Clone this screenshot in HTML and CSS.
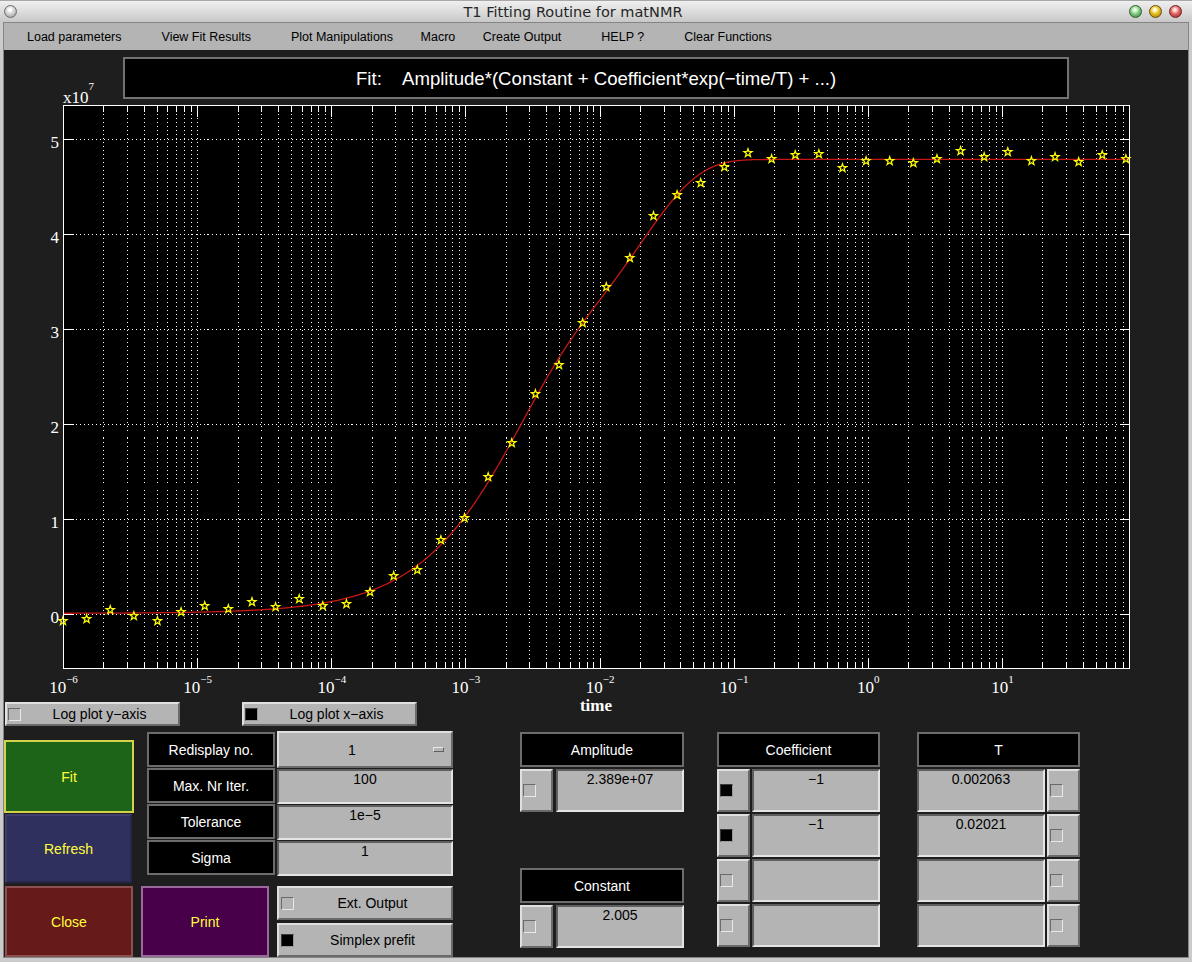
FILE: index.html
```html
<!DOCTYPE html>
<html>
<head>
<meta charset="utf-8">
<title>T1 Fitting Routine for matNMR</title>
<link rel="stylesheet" href="styles.css">
</head>
<body>
<div class="window">
  <div class="titlebar">
    <span class="orb orb-gray"></span>
    <span class="title">T1 Fitting Routine for matNMR</span>
    <span class="orbs"><span class="orb orb-green"></span><span class="orb orb-yellow"></span><span class="orb orb-red"></span></span>
  </div>
  <div class="frame">
    <div class="inner">
      <div class="menubar">
        <span class="menu">Load parameters</span>
        <span class="menu">View Fit Results</span>
        <span class="menu">Plot Manipulations</span>
        <span class="menu menu-narrow">Macro</span>
        <span class="menu">Create Output</span>
        <span class="menu">HELP ?</span>
        <span class="menu">Clear Functions</span>
      </div>
      <div class="client">
        <svg class="plot" width="1184" height="651" viewBox="4 50 1184 651">
          <rect class="ptitle-box" x="124" y="58" width="944" height="40"/>
          <text class="ptitle" x="356" y="85">Fit:</text>
          <text class="ptitle" x="402" y="85">Amplitude*(Constant + Coefficient*exp(−time/T) + ...)</text>
          <rect class="axes-bg" x="63.5" y="105.5" width="1066" height="563"/>
          <g id="grid"></g>
          <g id="data"></g>
          <rect class="axes-box" x="63.5" y="105.5" width="1066" height="563"/>
          <text class="tick" x="63" y="103">x10<tspan class="sup" dy="-13">7</tspan></text>
          <text class="tick" x="59" y="148" text-anchor="end">5</text>
          <text class="tick" x="59" y="243" text-anchor="end">4</text>
          <text class="tick" x="59" y="338" text-anchor="end">3</text>
          <text class="tick" x="59" y="433" text-anchor="end">2</text>
          <text class="tick" x="59" y="528" text-anchor="end">1</text>
          <text class="tick" x="59" y="623" text-anchor="end">0</text>
          <text class="tick" x="63.5" y="693" text-anchor="middle">10<tspan class="sup" dy="-10">−6</tspan></text>
          <text class="tick" x="197.6" y="693" text-anchor="middle">10<tspan class="sup" dy="-10">−5</tspan></text>
          <text class="tick" x="331.8" y="693" text-anchor="middle">10<tspan class="sup" dy="-10">−4</tspan></text>
          <text class="tick" x="465.9" y="693" text-anchor="middle">10<tspan class="sup" dy="-10">−3</tspan></text>
          <text class="tick" x="600.1" y="693" text-anchor="middle">10<tspan class="sup" dy="-10">−2</tspan></text>
          <text class="tick" x="734.2" y="693" text-anchor="middle">10<tspan class="sup" dy="-10">−1</tspan></text>
          <text class="tick" x="868.3" y="693" text-anchor="middle">10<tspan class="sup" dy="-10">0</tspan></text>
          <text class="tick" x="1002.5" y="693" text-anchor="middle">10<tspan class="sup" dy="-10">1</tspan></text>
          <text class="xlabel" x="596" y="711" text-anchor="middle">time</text>
        </svg>
        <div class="logrow">
          <div class="raised btn logbtn"><i class="cb"></i><span>Log plot y−axis</span></div>
          <div class="raised btn logbtn"><i class="cb cb-on"></i><span>Log plot x−axis</span></div>
        </div>
        <div class="controls">
          <div class="col col-actions">
            <div class="act act-fit">Fit</div>
            <div class="act act-refresh">Refresh</div>
            <div class="act act-close">Close</div>
          </div>
          <div class="col col-labels">
            <div class="lbl">Redisplay no.</div>
            <div class="lbl">Max. Nr Iter.</div>
            <div class="lbl">Tolerance</div>
            <div class="lbl">Sigma</div>
            <div class="act act-print">Print</div>
          </div>
          <div class="col col-values">
            <div class="raised popup"><span>1</span><i class="popup-ind"></i></div>
            <div class="sunken edit">100</div>
            <div class="sunken edit">1e−5</div>
            <div class="sunken edit">1</div>
            <div class="raised btn optbtn opt-ext"><i class="cb"></i><span>Ext. Output</span></div>
            <div class="raised btn optbtn opt-simplex"><i class="cb cb-on"></i><span>Simplex prefit</span></div>
          </div>
          <div class="col col-param col-amp">
            <div class="lbl">Amplitude</div>
            <div class="prow"><div class="raised cbbtn"><i class="cb"></i></div><div class="sunken edit">2.389e+07</div></div>
            <div class="lbl lbl-const">Constant</div>
            <div class="prow"><div class="raised cbbtn"><i class="cb"></i></div><div class="sunken edit">2.005</div></div>
          </div>
          <div class="col col-param col-coef">
            <div class="lbl">Coefficient</div>
            <div class="prow"><div class="raised cbbtn"><i class="cb cb-on"></i></div><div class="sunken edit">−1</div></div>
            <div class="prow"><div class="raised cbbtn"><i class="cb cb-on"></i></div><div class="sunken edit">−1</div></div>
            <div class="prow"><div class="raised cbbtn"><i class="cb"></i></div><div class="sunken edit"></div></div>
            <div class="prow"><div class="raised cbbtn"><i class="cb"></i></div><div class="sunken edit"></div></div>
          </div>
          <div class="col col-param col-t">
            <div class="lbl">T</div>
            <div class="prow"><div class="sunken edit">0.002063</div><div class="raised cbbtn"><i class="cb"></i></div></div>
            <div class="prow"><div class="sunken edit">0.02021</div><div class="raised cbbtn"><i class="cb"></i></div></div>
            <div class="prow"><div class="sunken edit"></div><div class="raised cbbtn"><i class="cb"></i></div></div>
            <div class="prow"><div class="sunken edit"></div><div class="raised cbbtn"><i class="cb"></i></div></div>
          </div>
        </div>
      </div>
    </div>
  </div>
</div>
<script src="script.js"></script>
</body>
</html>
```

FILE: styles.css
```css
* { box-sizing: border-box; }
body {
  margin: 0;
  background: #cbcbcb;
  font-family: "Liberation Sans", Arial, sans-serif;
}
.window {
  width: 1192px;
  height: 962px;
  display: flex;
  flex-direction: column;
  overflow: hidden;
}
.titlebar {
  flex: none;
  height: 22px;
  display: flex;
  align-items: center;
  padding: 0 10px 0 4px;
  background: linear-gradient(#efefef, #dcdcdc 50%, #c8c8c8);
  border-top: 1px solid #a8a8a8;
}
.title {
  flex: 1;
  text-align: center;
  font-family: "DejaVu Sans", sans-serif;
  font-size: 14.5px;
  line-height: 20px;
  color: #262626;
}
.orbs { display: flex; gap: 7px; }
.orb {
  width: 13px;
  height: 13px;
  border-radius: 50%;
  flex: none;
}
.orb-gray {
  background: radial-gradient(circle at 45% 35%, #ffffff 0 12%, #d2d2d2 45%, #8c8c8c 100%);
  border: 1px solid #6e6e6e;
}
.orb-green {
  background: radial-gradient(circle at 45% 35%, #eaffea 0 12%, #80cc80 45%, #2f7a2f 100%);
  border: 1px solid #3b5b3b;
}
.orb-yellow {
  background: radial-gradient(circle at 45% 35%, #ffffe0 0 12%, #e6bd1e 45%, #9a6c00 100%);
  border: 1px solid #6a5010;
}
.orb-red {
  background: radial-gradient(circle at 45% 35%, #ffe4e4 0 12%, #e06262 45%, #9c1a1a 100%);
  border: 1px solid #702020;
}
.frame {
  flex: 1;
  display: flex;
  padding: 0 3px 4px 3px;
  background: #cbcbcb;
}
.inner {
  flex: 1;
  display: flex;
  flex-direction: column;
  border: 1px solid #858585;
}
.menubar {
  flex: none;
  height: 27px;
  display: flex;
  align-items: center;
  padding-left: 3px;
  background: #b4b4b4;
  font-size: 12.5px;
  color: #000;
}
.menu { padding: 0 20px; white-space: nowrap; }
.menu-narrow { padding: 0 7.5px; }

.client {
  flex: 1;
  display: flex;
  flex-direction: column;
  background: #1e1e1e;
}
.plot { display: block; flex: none; overflow: visible; }
.ptitle-box { fill: #000; stroke: #727272; stroke-width: 2; }
.ptitle {
  font-family: "Liberation Sans", Arial, sans-serif;
  font-size: 18.6px;
  fill: #fff;
}
.axes-bg { fill: #000; }
.axes-box { fill: none; stroke: #fff; stroke-width: 1; shape-rendering: crispEdges; }
.grid { fill: none; stroke: #fff; stroke-width: 1; stroke-dasharray: 1 3; shape-rendering: crispEdges; }
.ticks { fill: none; stroke: #fff; stroke-width: 1; shape-rendering: crispEdges; }
.curve { fill: none; stroke: #c81616; stroke-width: 1.3; }
.star { fill: none; stroke: #ffff00; stroke-width: 1.2; }
.tick {
  font-family: "Liberation Serif", "Times New Roman", serif;
  font-size: 17px;
  fill: #fff;
}
.sup { font-size: 11px; }
.xlabel {
  font-family: "Liberation Serif", "Times New Roman", serif;
  font-size: 17px;
  font-weight: bold;
  fill: #fff;
}

.raised {
  background: #b4b4b4;
  border: 2px solid;
  border-color: #e0e0e0 #6a6a6a #6a6a6a #e0e0e0;
}
.sunken {
  background: #b4b4b4;
  border: 2px solid;
  border-color: #5e5e5e #e4e4e4 #e4e4e4 #5e5e5e;
}
.btn {
  display: flex;
  align-items: center;
  font-size: 14px;
  color: #000;
}
.btn span { flex: 1; text-align: center; white-space: nowrap; }
.cb {
  display: block;
  width: 13px;
  height: 13px;
  flex: none;
  border: 1px solid;
  border-color: #6a6a6a #e8e8e8 #e8e8e8 #6a6a6a;
  background: #b4b4b4;
}
.cb-on { background: #000; border-color: #3a3a3a #9a9a9a #9a9a9a #3a3a3a; }
.btn .cb { margin-left: 1px; }

.logrow {
  flex: none;
  height: 25px;
  display: flex;
  align-items: flex-end;
}
.logbtn { width: 175px; height: 24px; margin-left: 1px; }
.logbtn + .logbtn { margin-left: 62px; }

.controls {
  flex: none;
  display: flex;
  align-items: flex-start;
  margin-top: 5px;
}
.col { display: flex; flex-direction: column; flex: none; }

.act {
  display: flex;
  align-items: center;
  justify-content: center;
  font-size: 14px;
  color: #ffff3c;
}
.col-actions { width: 130px; padding-top: 9px; }
.act-fit {
  height: 73px;
  width: 130px;
  background: #1e6418;
  border: 2px solid #d4d44c;
}
.act-refresh {
  height: 69px;
  width: 127px;
  margin: 1px 0 0 1px;
  background: #30305e;
  border: 2px solid;
  border-color: #3e3e70 #26264a #26264a #3e3e70;
}
.act-close {
  height: 71px;
  width: 128px;
  margin: 3px 0 0 1px;
  background: #661a1a;
  border: 2px solid #8c5050;
}
.col-labels { width: 134px; margin-left: 7px; padding-top: 1px; gap: 1px; }
.col-labels .lbl { margin-left: 6px; }
.lbl {
  height: 35px;
  width: 128px;
  background: #000;
  border: 2px solid #6c6c6c;
  color: #fff;
  font-size: 14px;
  display: flex;
  align-items: center;
  justify-content: center;
  white-space: nowrap;
}
.act-print {
  height: 71px;
  width: 128px;
  margin-top: 10px;
  background: #48004a;
  border: 2px solid #9a6a9a;
}
.col-values { width: 176px; margin-left: 2px; gap: 1px; }
.popup {
  height: 37px;
  display: flex;
  align-items: center;
  font-size: 14px;
  color: #000;
  padding-right: 7px;
}
.popup span { flex: 1; text-align: center; }
.popup-ind {
  display: block;
  width: 11px;
  height: 5px;
  margin-left: 8px;
  background: #b4b4b4;
  border: 1px solid;
  border-color: #e8e8e8 #606060 #606060 #e8e8e8;
}
.edit {
  height: 35px;
  font-size: 14px;
  line-height: 16px;
  text-align: center;
  color: #000;
}
.optbtn { height: 34px; }
.opt-ext { margin-top: 9px; }
.opt-simplex { margin-top: 2px; }
.optbtn .cb { margin-left: 2px; }

.col-param { padding-top: 1px; }
.col-amp { width: 164px; margin-left: 67px; }
.col-coef { width: 163px; margin-left: 33px; }
.col-t { width: 163px; margin-left: 37px; }
.col-param .lbl { width: 100%; }
.lbl-const { margin-top: 56px; }
.prow {
  display: flex;
  gap: 2px;
  height: 43px;
  margin-top: 2px;
}
.col-amp .prow { gap: 3px; }
.prow .edit { flex: 1; height: 43px; }
.cbbtn {
  width: 33px;
  height: 43px;
  flex: none;
  display: flex;
  align-items: center;
  padding-left: 1px;
}
```

FILE: script.js
```js
(function () {
  var NS = 'http://www.w3.org/2000/svg';
  var L = 63.5, R = 1129.5, T = 105.5, B = 668.5, DEC = 134.14, YZ = 614.5, YU = 95;
  var grid = document.getElementById('grid');
  var data = document.getElementById('data');
  function add(p, tag, a) {
    var e = document.createElementNS(NS, tag);
    for (var k in a) e.setAttribute(k, a[k]);
    p.appendChild(e);
    return e;
  }
  function px(v) { return Math.round(v - 0.5) + 0.5; }
  var dots = '', ticks = '';
  for (var d = -6; d <= 1; d++) {
    for (var k = 1; k <= 9; k++) {
      var x = px(L + (d + Math.log10(k) + 6) * DEC);
      if (x > R) continue;
      if (x > L) dots += 'M' + x + ' ' + T + 'V' + B;
      var len = k === 1 ? 11 : 6;
      ticks += 'M' + x + ' ' + B + 'v' + (-len) + 'M' + x + ' ' + T + 'v' + len;
    }
  }
  for (var v = 0; v <= 5; v++) {
    var y = px(YZ - v * YU);
    dots += 'M' + L + ' ' + y + 'H' + R;
    ticks += 'M' + L + ' ' + y + 'h10M' + R + ' ' + y + 'h-10';
  }
  add(grid, 'path', { d: dots, 'class': 'grid' });
  add(grid, 'path', { d: ticks, 'class': 'ticks' });

  var c = '';
  for (var xx = L; xx <= R; xx += 1) {
    var t = Math.pow(10, (xx - L) / DEC - 6);
    var val = 2.389 * (2.005 - Math.exp(-t / 0.002063) - Math.exp(-t / 0.02021));
    c += (c ? 'L' : 'M') + xx.toFixed(1) + ' ' + (YZ - val * YU).toFixed(2);
  }
  add(data, 'path', { d: c, 'class': 'curve' });

  var ys = [621, 619, 610, 616, 621, 612, 606, 609, 602, 607, 599, 606, 604, 592, 576, 570,
    540, 518, 477, 443, 394, 365, 323, 287, 258, 216, 195, 183, 167, 153, 159, 155, 154,
    168, 161, 161, 163, 159, 151, 157, 152, 161, 157, 162, 155, 159];
  ys.forEach(function (sy, i) {
    var cx = 63 + i * 23.62;
    var pts = [];
    for (var j = 0; j < 10; j++) {
      var a = (-90 + j * 36) * Math.PI / 180;
      var r = j % 2 ? 1.7 : 4.3;
      pts.push((cx + r * Math.cos(a)).toFixed(2) + ',' + (sy + r * Math.sin(a)).toFixed(2));
    }
    add(data, 'polygon', { points: pts.join(' '), 'class': 'star' });
  });
})();
```
